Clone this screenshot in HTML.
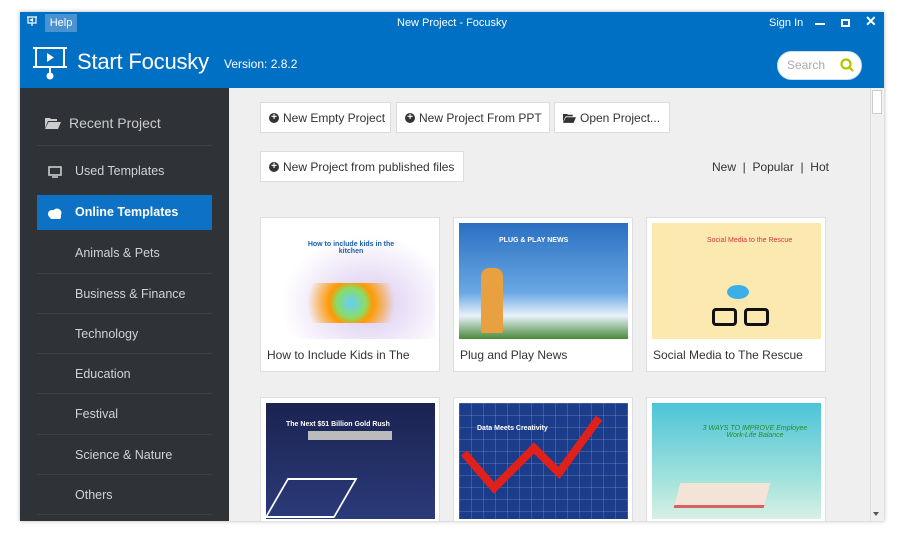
<!DOCTYPE html>
<html><head><style>
*{margin:0;padding:0;box-sizing:border-box}
body{width:900px;height:540px;background:#fff;font-family:"Liberation Sans",sans-serif;position:relative;overflow:hidden}
.win{position:absolute;left:20px;top:12px;width:864px;height:509px;background:#efeff0;box-shadow:0 0 4px rgba(0,0,0,.3);overflow:hidden}
.hdr{position:absolute;left:0;top:0;width:864px;height:76px;background:#0070c4;color:#fff}
.side{position:absolute;left:0;top:76px;width:209px;height:433px;background:#2f3337}
.item{position:absolute;left:17px;width:175px;height:40px;border-top:1px solid #3d4246;color:#d0d3d6;font-size:12.5px;line-height:40px;padding-left:38px}
.btn{position:absolute;height:31px;background:#fff;border:1px solid #dcdcdc;font-size:12px;color:#333;padding-left:8px;display:flex;align-items:center;white-space:nowrap}
.dot{display:inline-block;width:10px;height:10px;border-radius:50%;background:#333;color:#fff;font-size:10px;line-height:10px;text-align:center;font-weight:bold;margin-right:4px}
.card{position:absolute;width:180px;height:155px;background:#fff;border:1px solid #dedede}
.card .img{position:absolute;left:5px;top:5px;width:169px;height:116px;overflow:hidden}
.card .t{position:absolute;left:6px;top:130px;font-size:12px;color:#333}
</style></head><body>
<div class="win">
<div class="hdr">
  <svg style="position:absolute;left:6px;top:4px" width="12" height="12" viewBox="0 0 12 12" fill="none" stroke="#fff" stroke-width="1.2"><path d="M1 1h10M2 1v6h8V1M6 7v3M4.5 4l2-1v2z"/></svg>
  <div style="position:absolute;left:25px;top:2px;width:32px;height:18px;background:#4a92d2;font-size:11px;line-height:18px;text-align:center">Help</div>
  <div style="position:absolute;left:377px;top:5px;font-size:11px">New Project - Focusky</div>
  <div style="position:absolute;left:749px;top:5px;font-size:11px">Sign In</div>
  <div style="position:absolute;left:795px;top:11px;width:10px;height:2px;background:#fff"></div>
  <div style="position:absolute;left:821px;top:7px;width:9px;height:8px;border:2px solid #fff"></div>
  <div style="position:absolute;left:845px;top:1px;font-size:14px;font-weight:bold">✕</div>
  <svg style="position:absolute;left:12px;top:34px" width="36" height="34" viewBox="0 0 36 34" fill="none" stroke="#fff" stroke-width="2"><path d="M1 2h34M4 2v19h28V2M1 21h34M18 21v7"/><circle cx="18" cy="30" r="2.5" fill="#fff"/><path d="M15 7l7 4.5-7 4.5z" fill="#fff" stroke="none"/></svg>
  <div style="position:absolute;left:57px;top:37px;font-size:22px;letter-spacing:-0.2px">Start Focusky</div>
  <div style="position:absolute;left:204px;top:45px;font-size:12px">Version: 2.8.2</div>
  <div style="position:absolute;left:757px;top:39px;width:85px;height:29px;background:#fff;border-radius:15px;border:1px solid #cde"></div>
  <div style="position:absolute;left:767px;top:46px;font-size:12px;color:#aaa">Search</div>
  <svg style="position:absolute;left:819px;top:45px" width="16" height="16" viewBox="0 0 16 16" fill="none" stroke="#b5c400" stroke-width="2.2"><circle cx="7" cy="7" r="4.5"/><path d="M10.5 10.5l3.5 3.5"/></svg>
</div>
<div class="side">
  <svg style="position:absolute;left:25px;top:29px" width="16" height="12" viewBox="0 0 16 12" fill="#ccc"><path d="M0 1h5l1 1h6v2H3L0 11z M3.5 5H16l-3 7H0z"/></svg>
  <div style="position:absolute;left:49px;top:27px;font-size:14px;color:#ccc">Recent Project</div>
  <div class="item" style="top:57px;height:50px;line-height:50px"><svg style="position:absolute;left:11px;top:20px" width="14" height="12" viewBox="0 0 14 12" fill="none" stroke="#ccc" stroke-width="1.6"><rect x="1" y="1" width="12" height="8"/><path d="M4 11h6"/></svg>Used Templates</div>
  <div class="item" style="top:107px;background:#0d72c5;color:#fff;font-weight:bold;border:none;height:35px;line-height:35px"><svg style="position:absolute;left:10px;top:13px" width="16" height="11" viewBox="0 0 16 11" fill="#fff"><circle cx="5" cy="6" r="4"/><circle cx="10" cy="5" r="4.5"/><rect x="3" y="6" width="11" height="5" rx="2"/></svg>Online Templates</div>
  <div class="item" style="top:145px;border-top:none">Animals &amp; Pets</div>
  <div class="item" style="top:185px">Business &amp; Finance</div>
  <div class="item" style="top:225px">Technology</div>
  <div class="item" style="top:265px">Education</div>
  <div class="item" style="top:305px">Festival</div>
  <div class="item" style="top:346px">Science &amp; Nature</div>
  <div class="item" style="top:386px">Others</div>
  <div class="item" style="top:426px"></div>
</div>
<div class="btn" style="left:240px;top:90px;width:131px"><span class="dot">+</span>New Empty Project</div>
<div class="btn" style="left:376px;top:90px;width:154px"><span class="dot">+</span>New Project From PPT</div>
<div class="btn" style="left:534px;top:90px;width:116px"><svg width="13" height="10" viewBox="0 0 16 12" fill="#333" style="margin-right:4px"><path d="M0 1h5l1 1h6v2H3L0 11z M3.5 5H16l-3 7H0z"/></svg>Open Project...</div>
<div class="btn" style="left:240px;top:139px;width:204px"><span class="dot">+</span>New Project from published files</div>
<div style="position:absolute;left:692px;top:148px;font-size:12px;color:#333">New &nbsp;| &nbsp;Popular &nbsp;| &nbsp;Hot</div>
<div class="card" style="left:240px;top:205px"><div class="img" style="background:radial-gradient(ellipse at 60% 70%,#d9c8f0 0,#fff 60%)"><div style="position:absolute;left:40px;top:18px;font-size:7px;font-weight:bold;color:#1a5fa8;text-align:center;width:90px">How to include kids in the kitchen</div><div style="position:absolute;left:15px;top:60px;width:140px;height:40px;background:radial-gradient(circle,#6cf 0,#8d6 20%,#f90 30%,transparent 60%)"></div></div><div class="t">How to Include Kids in The</div></div>
<div class="card" style="left:433px;top:205px"><div class="img" style="background:linear-gradient(#2a6fc1,#6aa8e4 60%,#e8f2fa 80%,#4a8a3a)"><div style="position:absolute;left:40px;top:14px;font-size:7px;color:#fff;font-weight:bold">PLUG &amp; PLAY NEWS</div><div style="position:absolute;left:22px;top:45px;width:22px;height:65px;background:#e8a040;border-radius:8px 8px 2px 2px"></div></div><div class="t">Plug and Play News</div></div>
<div class="card" style="left:626px;top:205px"><div class="img" style="background:#fbe9b0"><div style="position:absolute;left:55px;top:14px;font-size:7px;color:#d33">Social Media to the Rescue</div><div style="position:absolute;left:60px;top:85px;width:25px;height:18px;border:3px solid #111;border-radius:4px"></div><div style="position:absolute;left:92px;top:85px;width:25px;height:18px;border:3px solid #111;border-radius:4px"></div><div style="position:absolute;left:75px;top:62px;width:22px;height:14px;background:#3bb0e8;border-radius:50%"></div></div><div class="t">Social Media to The Rescue</div></div>
<div class="card" style="left:240px;top:385px"><div class="img" style="background:linear-gradient(#1b2350,#2b3a7a)"><div style="position:absolute;left:20px;top:18px;font-size:7px;color:#fff;font-weight:bold">The Next $51 Billion Gold Rush</div><div style="position:absolute;left:42px;top:28px;width:84px;height:9px;background:#bbb"></div><div style="position:absolute;left:10px;top:75px;width:70px;height:40px;border:2px solid #fff;transform:skewX(-30deg)"></div></div></div>
<div class="card" style="left:433px;top:385px"><div class="img" style="background:#1a3c8a;background-image:linear-gradient(rgba(255,255,255,.15) 1px,transparent 1px),linear-gradient(90deg,rgba(255,255,255,.15) 1px,transparent 1px);background-size:12px 12px"><div style="position:absolute;left:18px;top:22px;font-size:7px;color:#fff;font-weight:bold">Data Meets Creativity</div><svg style="position:absolute;left:0;top:10px" width="169" height="90"><path d="M5 40l30 35 40-40 25 25 40-55" stroke="#e0201a" stroke-width="8" fill="none"/></svg></div></div>
<div class="card" style="left:626px;top:385px"><div class="img" style="background:linear-gradient(#4bc4d8,#a8e4dc 70%,#d8f0e4)"><div style="position:absolute;left:48px;top:22px;font-size:7px;color:#2a8a2a;font-style:italic;width:110px;text-align:center">3 WAYS TO IMPROVE Employee Work-Life Balance</div><div style="position:absolute;left:25px;top:80px;width:90px;height:25px;background:#f4e4d8;border-bottom:3px solid #d86060;transform:skewX(-15deg)"></div></div></div>
<div style="position:absolute;left:850px;top:76px;width:14px;height:433px;background:#f0f0f0;border-left:1px solid #ddd"></div>
<div style="position:absolute;left:852px;top:78px;width:10px;height:24px;background:#fff;border:1px solid #ccc"></div>
<div style="position:absolute;left:853px;top:500px;width:0;height:0;border:3px solid transparent;border-top:4px solid #555"></div>
</div>
</body></html>
